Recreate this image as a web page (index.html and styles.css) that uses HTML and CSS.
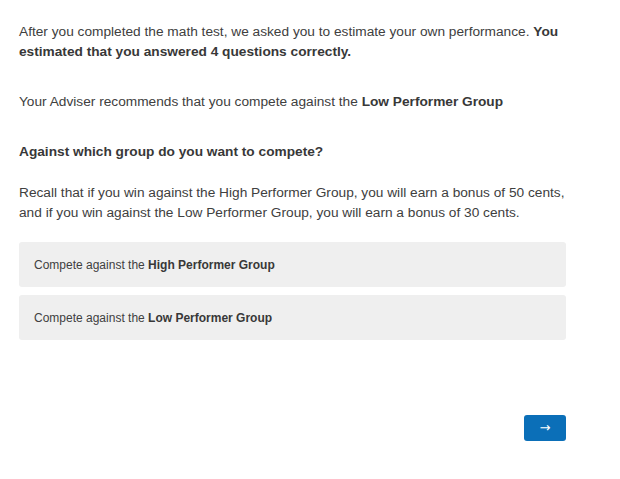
FILE: index.html
```html
<!DOCTYPE html>
<html>
<head>
<meta charset="utf-8">
<link rel="stylesheet" href="styles.css">
</head>
<body>
<div class="page">
  <p class="q q-first">After you completed the math test, we asked you to estimate your own performance. <b>You estimated that you answered 4 questions correctly.</b></p>
  <p class="q q-adv">Your Adviser recommends that you compete against the <b>Low Performer Group</b></p>
  <p class="q q-ask"><b>Against which group do you want to compete?</b></p>
  <p class="q q-recall">Recall that if you win against the High Performer Group, you will earn a bonus of 50 cents, and if you win against the Low Performer Group, you will earn a bonus of 30 cents.</p>
  <div class="choices">
    <div class="choice"><span>Compete against the <b>High Performer Group</b></span></div>
    <div class="choice"><span>Compete against the <b>Low Performer Group</b></span></div>
  </div>
  <div class="nav">
    <button class="next">→</button>
  </div>
</div>
</body>
</html>
```
FILE: styles.css
```css
html, body {
  margin: 0;
  padding: 0;
  background: #fff;
}
body {
  font-family: "Liberation Sans", Arial, sans-serif;
  color: #404040;
}
.page {
  width: 547px;
  padding: 22px 0 0 19px;
}
.q {
  margin: 0;
  font-size: 13.7px;
  line-height: 20px;
}
.q b { color: #383838; }
.q-adv { margin-top: 30px; }
.q-ask { margin-top: 30px; }
.q-recall { margin-top: 21px; }
.choices {
  margin-top: 19px;
  display: flex;
  flex-direction: column;
  gap: 8px;
}
.choice {
  height: 45px;
  box-sizing: border-box;
  background: #efefef;
  border-radius: 3px;
  padding: 1px 0 0 15px;
  display: flex;
  align-items: center;
  font-size: 12px;
  color: #404040;
}
.choice b { color: #383838; }
.nav {
  margin-top: 75px;
  display: flex;
  justify-content: flex-end;
}
.next {
  width: 42px;
  height: 26px;
  border: none;
  border-radius: 3px;
  background: #0b6fb8;
  color: #fff;
  font-family: "DejaVu Sans", sans-serif;
  font-size: 13px;
  padding: 0;
  line-height: 26px;
}
```
